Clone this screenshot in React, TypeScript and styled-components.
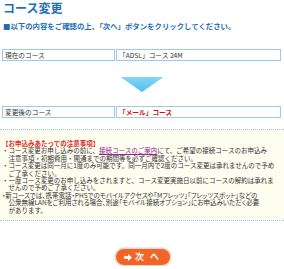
import React from "react";
import styled, { createGlobalStyle } from "styled-components";

const Global = createGlobalStyle`
  html, body { margin: 0; padding: 0; background: #ffffff; }
  body {
    width: 284px;
    font-family: "Noto Sans CJK JP", "Noto Sans", sans-serif;
    color: #333333;
  }
`;

const Page = styled.div`
  width: 284px;
  display: flex;
  flex-direction: column;
`;

const Title = styled.h1`
  margin: 0;
  padding-left: 3px;
  height: 15px;
  font-size: 12px;
  line-height: 15px;
  font-weight: 700;
  color: #1f6fb8;
`;

const Lead = styled.p`
  margin: 7px 0 0;
  padding-left: 3px;
  font-size: 7.4px;
  line-height: 8px;
  font-weight: 700;
  color: #1f6fb8;
  white-space: nowrap;
`;

const Row = styled.div<{ $top: number }>`
  margin: ${(p) => p.$top}px 3px 0 2px;
  height: 12px;
  display: grid;
  grid-template-columns: 113px 1fr;
  column-gap: 1px;
`;

const Cell = styled.div<{ $accent?: boolean }>`
  border: 1px solid #9ccbea;
  background: #ffffff;
  padding-left: 2px;
  font-size: 6.7px;
  line-height: 10px;
  white-space: nowrap;
  color: ${(p) => (p.$accent ? "#cc1111" : "#333333")};
  font-weight: ${(p) => (p.$accent ? 700 : 400)};
`;

const ArrowZone = styled.div`
  height: 45px;
  display: flex;
  justify-content: center;
  align-items: flex-start;
`;

const DownArrow = styled.div`
  margin-top: 16px;
  width: 43px;
  height: 15px;
  background: linear-gradient(180deg, #86d6f6 0%, #4cbff0 100%);
  clip-path: polygon(0 0, 100% 0, 50% 100%);
`;

const Notice = styled.div`
  margin-top: 11px;
  border-top: 1px dotted #98c5e6;
  border-bottom: 1px dotted #98c5e6;
  background: #fffdf0;
  padding: 10px 0 6px 2px;
  font-size: 6.5px;
  line-height: 7.4px;
  white-space: nowrap;
  color: #333333;
`;

const NoticeTitle = styled.div`
  color: #dd2a1b;
  font-weight: 700;
`;

const Item = styled.div`
  padding-left: 6.5px;
  text-indent: -6.5px;
`;

const Tight = styled.span`
  font-feature-settings: "palt";
`;

const Link = styled.a`
  color: #8a2a9a;
  text-decoration: underline;
`;

const ButtonZone = styled.div`
  display: flex;
  justify-content: center;
  padding-top: 27px;
  padding-left: 1px;
`;

const NextButton = styled.button`
  width: 56px;
  height: 18px;
  border-radius: 9px;
  border: 1px solid #f3d2c4;
  background: #f26529;
  color: #ffffff;
  font-family: "Noto Sans CJK JP", sans-serif;
  font-weight: 700;
  font-size: 9px;
  line-height: 16px;
  padding: 0;
  display: flex;
  align-items: center;
  justify-content: center;
  gap: 3px;
  box-shadow: 0 0 0 1px #fbe9e1;
`;

const Label = styled.span`
  letter-spacing: 2px;
`;

const ArrowIcon = () => (
  <svg width="8" height="7" viewBox="0 0 8 7" aria-hidden>
    <rect x="0" y="2.2" width="4.5" height="2.6" fill="#fff" />
    <polygon points="4,0 8,3.5 4,7" fill="#fff" />
  </svg>
);

export default function App() {
  return (
    <Page>
      <Global />
      <Title>コース変更</Title>
      <Lead>■以下の内容をご確認の上、「次へ」ボタンをクリックしてください。</Lead>
      <Row $top={19}>
        <Cell>現在のコース</Cell>
        <Cell>「ADSL」コース 24M</Cell>
      </Row>
      <ArrowZone>
        <DownArrow />
      </ArrowZone>
      <Row $top={0}>
        <Cell>変更後のコース</Cell>
        <Cell $accent>「メール」コース</Cell>
      </Row>
      <Notice>
        <NoticeTitle>【お申込みあたっての注意事項】</NoticeTitle>
        <Item>
          ・コース変更お申し込みの前に、<Link href="#">接続コースのご案内</Link>にて、ご希望の接続コースのお申込み
          <br />
          注意事項・初期費用・開通までの期間等を必ずご確認ください。
        </Item>
        <Item>
          ・コース変更は同一月に1度のみ可能です。同一月内で2度のコース変更は承れませんので予め
          <br />
          ご了承ください。
        </Item>
        <Item>
          ・一度コース変更のお申し込みをされますと、コース変更実施日以前にコースの解約は承れま
          <br />
          せんので予めご了承ください。
        </Item>
        <Item>
          <Tight>・新コースでは、携帯電話・PHSでのモバイルアクセスや「Mフレッツ」「フレッツスポット」などの</Tight>
          <br />
          <Tight>公衆無線LANをご利用される場合、別途「モバイル接続オプション」にお申込みいただく必要</Tight>
          <br />
          があります。
        </Item>
      </Notice>
      <ButtonZone>
        <NextButton type="button">
          <ArrowIcon />
          <Label>次 へ</Label>
        </NextButton>
      </ButtonZone>
    </Page>
  );
}
